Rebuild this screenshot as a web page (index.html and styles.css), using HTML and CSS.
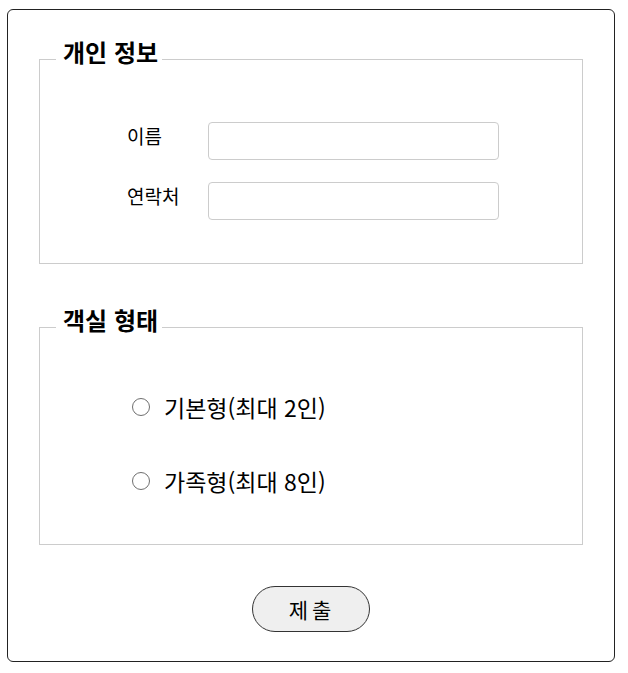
FILE: index.html
```html
<!DOCTYPE html>
<html lang="ko">
<head>
<meta charset="utf-8">
<link rel="stylesheet" href="styles.css">
</head>
<body>
<form class="form">
  <fieldset class="group group-info">
    <legend class="legend">개인 정보</legend>
    <div class="fields">
      <div class="row">
        <label class="label" for="name">이름</label>
        <input class="input" id="name" type="text">
      </div>
      <div class="row">
        <label class="label" for="tel">연락처</label>
        <input class="input" id="tel" type="text">
      </div>
    </div>
  </fieldset>
  <fieldset class="group group-room">
    <legend class="legend">객실 형태</legend>
    <div class="radios">
      <label class="radio-row"><input class="radio" type="radio" name="room"><span>기본형(최대 2인)</span></label>
      <label class="radio-row"><input class="radio" type="radio" name="room"><span>가족형(최대 8인)</span></label>
    </div>
  </fieldset>
  <div class="actions">
    <button class="submit" type="submit">제출</button>
  </div>
</form>
</body>
</html>
```
FILE: styles.css
```css
html, body {
  margin: 0;
  padding: 0;
  background: #fff;
}
body {
  font-family: "Noto Sans CJK KR", "Noto Sans", sans-serif;
  color: #000;
}
.form {
  box-sizing: border-box;
  width: 608px;
  height: 653px;
  margin: 9px 0 0 7px;
  padding: 27px 31px 0;
  border: 1px solid #222;
  border-radius: 6px;
}
.group {
  margin: 0;
  border: 1px solid #ccc;
  padding: 0;
  min-width: 0;
}
.legend {
  margin-left: 16px;
  padding: 0 4px 14px 7px;
  font-size: 24px;
  font-weight: bold;
  line-height: 30px;
}
.fields {
  width: 372px;
  margin: 0 0 0 87px;
  padding: 41px 0 43px;
  display: flex;
  flex-direction: column;
  gap: 22px;
}
.row {
  display: flex;
  align-items: center;
}
.label {
  width: 81px;
  font-size: 19px;
  line-height: 24px;
  margin-top: -10px;
}
.input {
  box-sizing: border-box;
  width: 291px;
  height: 38px;
  margin: 0;
  border: 1px solid #ccc;
  border-radius: 4px;
  padding: 0 8px;
  font: inherit;
}
.group-room {
  margin-top: 41px;
}
.radios {
  padding: 43px 0 48px 92px;
  display: flex;
  flex-direction: column;
  gap: 44px;
}
.radio-row {
  display: flex;
  align-items: center;
  height: 30px;
  font-size: 23px;
}
.radio {
  appearance: none;
  -webkit-appearance: none;
  box-sizing: border-box;
  width: 18px;
  height: 18px;
  margin: 0 14px 0 0;
  border: 1.5px solid #6f6f6f;
  border-radius: 50%;
  background: #fff;
}
.actions {
  display: flex;
  justify-content: center;
  margin-top: 41px;
}
.submit {
  box-sizing: border-box;
  width: 118px;
  height: 46px;
  border: 1px solid #333;
  border-radius: 23px;
  background: #efefef;
  font-family: "Noto Sans CJK KR", sans-serif;
  font-size: 21px;
  letter-spacing: 4px;
  padding: 0 0 0 2px;
  color: #000;
}
```
